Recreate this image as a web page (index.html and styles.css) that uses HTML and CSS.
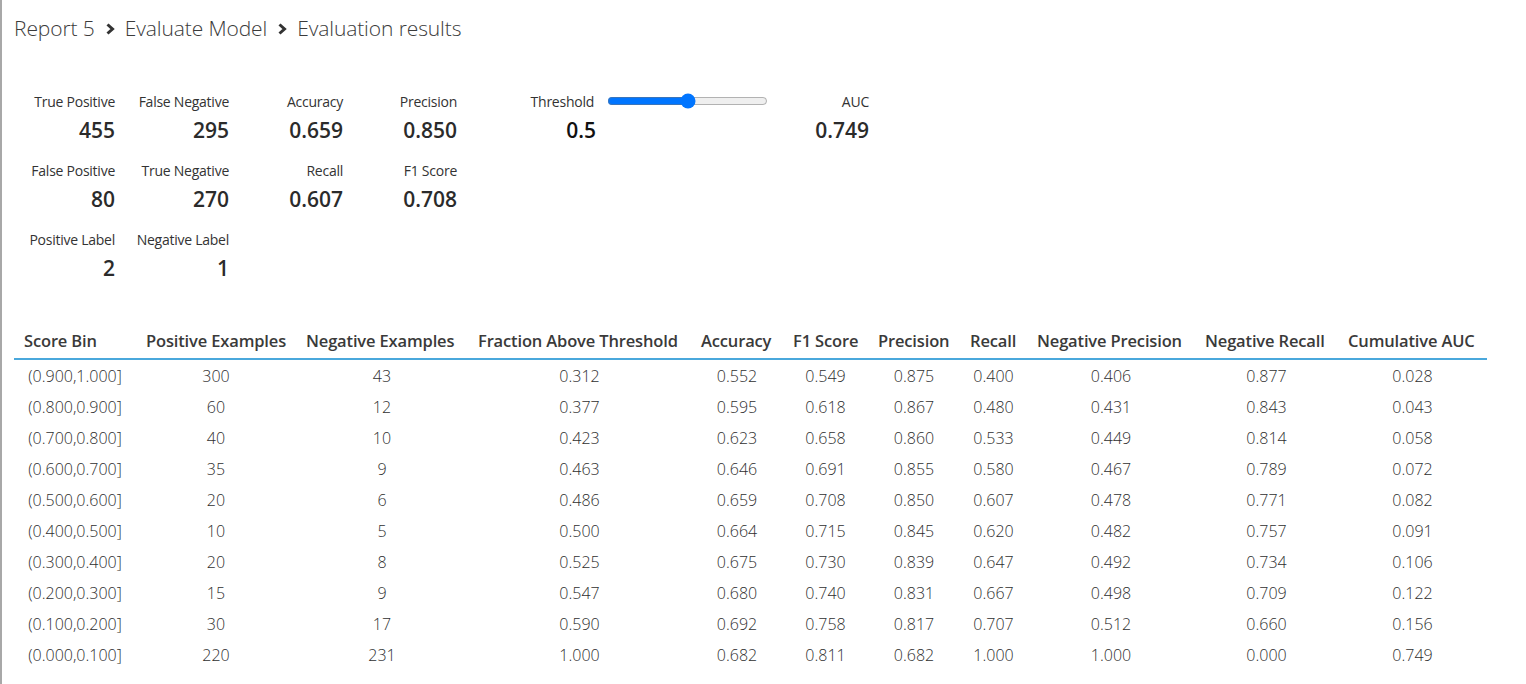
FILE: index.html
```html
<!DOCTYPE html>
<html lang="en">
<head>
<meta charset="utf-8">
<title>Evaluation results</title>
<link rel="stylesheet" href="styles.css">
</head>
<body>
<div class="page">
  <nav class="crumbs">
    <span class="crumb">Report 5</span>
    <svg class="chev" width="10" height="12" viewBox="0 0 10 12"><path d="M2.5 1.5 L7.5 6 L2.5 10.5" fill="none" stroke="#333" stroke-width="3" stroke-linejoin="miter"/></svg>
    <span class="crumb">Evaluate Model</span>
    <svg class="chev" width="10" height="12" viewBox="0 0 10 12"><path d="M2.5 1.5 L7.5 6 L2.5 10.5" fill="none" stroke="#333" stroke-width="3" stroke-linejoin="miter"/></svg>
    <span class="crumb">Evaluation results</span>
  </nav>

  <section class="metrics">
    <div class="grid">
      <div class="m"><div class="lab">True Positive</div><div class="val">455</div></div>
      <div class="m"><div class="lab">False Negative</div><div class="val">295</div></div>
      <div class="m"><div class="lab">Accuracy</div><div class="val">0.659</div></div>
      <div class="m"><div class="lab">Precision</div><div class="val">0.850</div></div>
      <div class="m"><div class="lab">False Positive</div><div class="val">80</div></div>
      <div class="m"><div class="lab">True Negative</div><div class="val">270</div></div>
      <div class="m"><div class="lab">Recall</div><div class="val">0.607</div></div>
      <div class="m"><div class="lab">F1 Score</div><div class="val">0.708</div></div>
      <div class="m"><div class="lab">Positive Label</div><div class="val">2</div></div>
      <div class="m"><div class="lab">Negative Label</div><div class="val">1</div></div>
    </div>
    <div class="thr">
      <div class="m thr-m"><div class="lab">Threshold</div><div class="val">0.5</div></div>
      <input class="slider" type="range" min="0" max="1" step="0.01" value="0.5">
      <div class="m auc"><div class="lab">AUC</div><div class="val">0.749</div></div>
    </div>
  </section>

  <table class="bins">
    <colgroup>
      <col style="width:122px"><col style="width:160px"><col style="width:172px"><col style="width:223px">
      <col style="width:92px"><col style="width:85px"><col style="width:92px"><col style="width:67px">
      <col style="width:168px"><col style="width:143px"><col style="width:149px">
    </colgroup>
    <thead>
      <tr>
        <th>Score Bin</th><th>Positive Examples</th><th>Negative Examples</th><th>Fraction Above Threshold</th>
        <th>Accuracy</th><th>F1 Score</th><th>Precision</th><th>Recall</th>
        <th>Negative Precision</th><th>Negative Recall</th><th>Cumulative AUC</th>
      </tr>
    </thead>
    <tbody>
      <tr><td>(0.900,1.000]</td><td>300</td><td>43</td><td>0.312</td><td>0.552</td><td>0.549</td><td>0.875</td><td>0.400</td><td>0.406</td><td>0.877</td><td>0.028</td></tr>
      <tr><td>(0.800,0.900]</td><td>60</td><td>12</td><td>0.377</td><td>0.595</td><td>0.618</td><td>0.867</td><td>0.480</td><td>0.431</td><td>0.843</td><td>0.043</td></tr>
      <tr><td>(0.700,0.800]</td><td>40</td><td>10</td><td>0.423</td><td>0.623</td><td>0.658</td><td>0.860</td><td>0.533</td><td>0.449</td><td>0.814</td><td>0.058</td></tr>
      <tr><td>(0.600,0.700]</td><td>35</td><td>9</td><td>0.463</td><td>0.646</td><td>0.691</td><td>0.855</td><td>0.580</td><td>0.467</td><td>0.789</td><td>0.072</td></tr>
      <tr><td>(0.500,0.600]</td><td>20</td><td>6</td><td>0.486</td><td>0.659</td><td>0.708</td><td>0.850</td><td>0.607</td><td>0.478</td><td>0.771</td><td>0.082</td></tr>
      <tr><td>(0.400,0.500]</td><td>10</td><td>5</td><td>0.500</td><td>0.664</td><td>0.715</td><td>0.845</td><td>0.620</td><td>0.482</td><td>0.757</td><td>0.091</td></tr>
      <tr><td>(0.300,0.400]</td><td>20</td><td>8</td><td>0.525</td><td>0.675</td><td>0.730</td><td>0.839</td><td>0.647</td><td>0.492</td><td>0.734</td><td>0.106</td></tr>
      <tr><td>(0.200,0.300]</td><td>15</td><td>9</td><td>0.547</td><td>0.680</td><td>0.740</td><td>0.831</td><td>0.667</td><td>0.498</td><td>0.709</td><td>0.122</td></tr>
      <tr><td>(0.100,0.200]</td><td>30</td><td>17</td><td>0.590</td><td>0.692</td><td>0.758</td><td>0.817</td><td>0.707</td><td>0.512</td><td>0.660</td><td>0.156</td></tr>
      <tr><td>(0.000,0.100]</td><td>220</td><td>231</td><td>1.000</td><td>0.682</td><td>0.811</td><td>0.682</td><td>1.000</td><td>1.000</td><td>0.000</td><td>0.749</td></tr>
    </tbody>
  </table>
</div>
</body>
</html>
```

FILE: styles.css
```css
html, body {
  margin: 0;
  padding: 0;
  background: #ffffff;
}
body {
  font-family: "Segoe UI", "Open Sans", "Noto Sans", sans-serif;
  color: #333333;
}
.page {
  border-left: 2px solid #a8a8a8;
  min-height: 684px;
  box-sizing: border-box;
}
.crumbs {
  display: flex;
  align-items: center;
  padding: 13px 0 0 12px;
  height: 30px;
  gap: 10px;
}
.crumb {
  font-size: 21px;
  font-weight: 300;
  color: #3b3b3b;
  line-height: 30px;
  letter-spacing: -0.1px;
}
.chev {
  display: block;
  margin-top: 1px;
}
.metrics {
  display: flex;
  margin-top: 50px;
}
.grid {
  display: grid;
  grid-template-columns: 113px 114px 114px 114px;
  grid-auto-rows: 69px;
}
.m {
  text-align: right;
}
.lab {
  font-size: 14px;
  line-height: 18px;
  color: #333333;
  white-space: nowrap;
  letter-spacing: -0.25px;
}
.val {
  font-size: 21px;
  font-weight: 600;
  line-height: 26px;
  margin-top: 6px;
  color: #2b2b2b;
}
.thr {
  display: flex;
  align-items: flex-start;
}
.thr-m {
  width: 139px;
}
.thr-m .lab {
  padding-right: 2px;
}
.thr-m .val {
  color: #111111;
}
.slider {
  width: 161px;
  margin: 0 0 0 11px;
  height: 16px;
  accent-color: #0075ff;
}
.auc {
  width: 101px;
}
.bins {
  margin: 27px 0 0 12px;
  border-collapse: separate;
  border-spacing: 0;
  table-layout: fixed;
  width: 1473px;
}
.bins th {
  font-size: 16.5px;
  font-weight: 600;
  color: #3a3a3a;
  text-align: left;
  padding: 3px 0 6px 10px;
  height: 22px;
  line-height: 22px;
  white-space: nowrap;
  border-bottom: 2px solid #4aa8dc;
  letter-spacing: -0.15px;
}
.bins td {
  font-size: 16px;
  font-weight: 300;
  color: #2f2f2f;
  text-align: center;
  height: 31px;
  padding: 0;
  line-height: 20px;
  white-space: nowrap;
}
```
